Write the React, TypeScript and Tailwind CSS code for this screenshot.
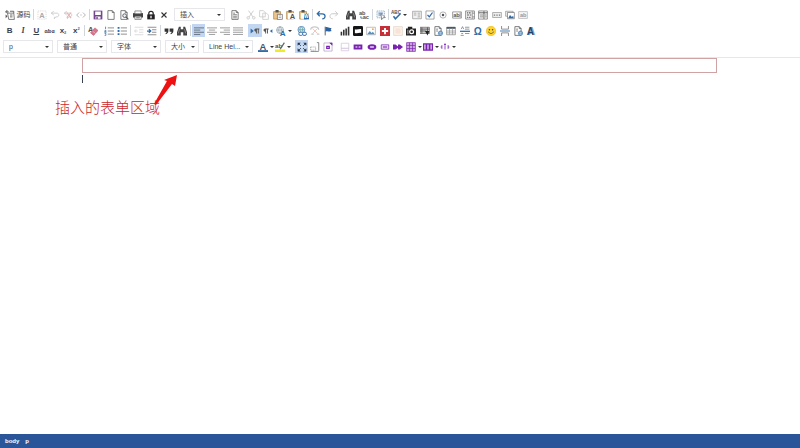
import { useState } from 'react';
import type { ReactNode } from 'react';

const D = '#555';
const B = '#2f6ca8';
const L = '#c9c9c9';
const P = '#7a22b0';

const doc = <path d="M3 1h7l3 3v11H3zM10 1v3h3" fill="#fff" stroke={D} strokeWidth="1.2" />;
const globe = (
  <g fill="#dbe9f7" stroke={B}>
    <circle cx="12" cy="11.5" r="3.5" />
    <path d="M8.5 11.5h7M12 8c-2 2-2 5 0 7M12 8c2 2 2 5 0 7" fill="none" strokeWidth=".7" />
  </g>
);
const board = (
  <>
    <path d="M1 2.500h11v12H1z" fill="#ecc78d" stroke="#b98a4a" strokeWidth="1.2" />
    <path d="M4 0h5v4H4z" fill="#555" />
  </>
);
const letter = (text: string, x: number, y: number, size: number, fill = D) => (
  <text x={x} y={y} fontSize={size} fill={fill} fontWeight="700" fontFamily="Liberation Sans, sans-serif">{text}</text>
);
const lines = (d: string, stroke = D, w = 1.4) => <path d={d} fill="none" stroke={stroke} strokeWidth={w} />;

const icons: Record<string, ReactNode> = {
  source: (
    <>
      <path d="M4 5h10l1 10H6z" fill="#fff" stroke={D} strokeWidth="1.2" />
      {lines('M0 3h6M3 0v5M8 2h6M14 2v3M8 8h4M8 11h4')}
      <path d="M1 7l3 3-3 3z" fill={D} />
    </>
  ),
  autoformat: (
    <>
      <path d="M1.500 1.500h13v13h-13z" fill="none" stroke={L} strokeDasharray="2 1.500" />
      {letter('A', 3.5, 13, 12, '#aaa')}
    </>
  ),
  commentOff: lines('M6 2L2 5l4 3M2 5h9c4 0 4 6 0 6H9l-2 3v-3', L),
  uncomment: (
    <>
      {lines('M6 2L2 5l4 3M2 5h9c4 0 4 6 0 6H9l-2 3v-3', L)}
      {lines('M6 4l7 9M13 4l-7 8', '#e6b1b1', 1.8)}
    </>
  ),
  tag: lines('M5 4L1 8l4 4M11 4l4 4-4 4M7 8h2', '#aaa'),
  save: (
    <>
      <path d="M1 1h14v14H1z" fill="#73468f" />
      <path d="M3.500 2.500h9V8h-9zM4 10.500h8V14H4z" fill="#fff" />
      <path d="M5 11.500h3V14H5z" fill="#73468f" />
    </>
  ),
  page: doc,
  preview: (
    <>
      {doc}
      <circle cx="9" cy="9" r="3" fill="#e6eef6" stroke={D} strokeWidth="1.4" />
      {lines('M11 11l4 4', D, 2)}
    </>
  ),
  print: (
    <>
      <path d="M0 5h16v7H0z" fill="#444" />
      <path d="M3 1.500h10V6H3zM3 10h10v5H3z" fill="#fff" stroke={D} />
      {lines('M5 12.500h6')}
    </>
  ),
  lock: (
    <>
      {lines('M4.500 8V5c0-4 7-4 7 0v3', '#222', 2)}
      <path d="M2 7h12v8H2z" fill="#222" />
      <path d="M7 9h2v4H7z" fill="#fff" />
    </>
  ),
  close: lines('M4 4l8 8M12 4l-8 8', '#333', 1.8),
  template: (
    <>
      {doc}
      {lines('M5 5h3M5 7.500h6M5 10h6M5 12.500h6', '#777')}
    </>
  ),
  cut: (
    <>
      {lines('M4 1l7 10M12 1L5 11', L)}
      <circle cx="3.5" cy="12.5" r="2" fill="none" stroke={L} strokeWidth="1.4" />
      <circle cx="12.5" cy="12.5" r="2" fill="none" stroke={L} strokeWidth="1.4" />
    </>
  ),
  copy: <path d="M1 1h6l3 3v7H1zM6 5h6l3 3v7H6z" fill="#fff" stroke={L} strokeWidth="1.3" />,
  paste: (
    <>
      {board}
      <path d="M7 7h8v8H7z" fill="#fff" stroke={D} />
      {lines('M9 9.500h4M9 12h4', '#888', 1)}
    </>
  ),
  pasteText: (
    <>
      {board}
      <path d="M3 5h12v10H3z" fill="#fff" />
      {letter('A', 6, 15, 12)}
    </>
  ),
  pasteWord: (
    <>
      {board}
      <path d="M3 5h8v9H3z" fill="#fff" />
      <path d="M8 6h8v9H8z" fill={B} />
      {letter('W', 8, 13, 8, '#fff')}
    </>
  ),
  undo: lines('M6 2L2 6l4 4M2 6h8c6 0 6 8 0 8', B, 2),
  redo: lines('M10 2l4 4-4 4M14 6H6c-6 0-6 8 0 8', L, 1.6),
  find: (
    <>
      <path d="M3 1h3v4h4V1h3l3 9v5h-6v-5H6v5H0v-5z" fill="#444" />
      {lines('M4 5l-2 7M12 5l2 7', '#aaa', 1)}
    </>
  ),
  replace: (
    <>
      {letter('ab', 0, 8, 9)}
      {letter('ac', 6, 15, 9)}
      {lines('M3 10v3h3', B)}
    </>
  ),
  selectAll: (
    <>
      <path d="M1.500 1.500h12v11h-12z" fill="#eef4fa" stroke="#7a95b0" strokeDasharray="2 1" />
      {lines('M4 5h7M4 8h4', B)}
      <path d="M8 6l7 6-4 .5-2 3z" fill="#fff" stroke={D} />
    </>
  ),
  spell: (
    <>
      {letter('ABC', 0, 6, 7.5)}
      {lines('M4 10l3 4 8-8', B, 2.4)}
    </>
  ),
  form: (
    <>
      <path d="M1 2h14v12H1z" fill="#f1f1f1" stroke="#888" />
      {lines('M3 5h4M3 8h4M9 5h4M9 8h4M9 11h4', '#999', 1.2)}
    </>
  ),
  checkbox: (
    <>
      <path d="M1.500 1.500h13v13h-13z" fill="#fff" stroke="#777" />
      {lines('M4 8l3 3 5-7', B, 2)}
    </>
  ),
  radio: (
    <>
      <circle cx="8" cy="8" r="5" fill="#fff" stroke="#888" />
      <circle cx="8" cy="8" r="2" fill={D} />
    </>
  ),
  textField: (
    <>
      <path d="M1 3h14v10H1z" fill="#fff" stroke="#666" />
      {letter('ab', 2, 11, 9)}
      {lines('M13 4v8', D, 1)}
    </>
  ),
  textarea: (
    <>
      <path d="M1 1.500h14v13H1z" fill="#fff" stroke="#555" />
      {lines('M3 4.500h2M6 4.500h3M3 8h4M3 11.500h2M6 11.500h3M8 8h2', D, 1.8)}
      {lines('M11.500 2v12M12 5h3M12 11h3', '#555', 1)}
    </>
  ),
  selectField: (
    <>
      <path d="M1 1.500h14v13H1z" fill="#fff" stroke="#555" />
      {lines('M1 4.500h14M9.500 2v12', '#555', 1.5)}
      {lines('M3 8h5M3 11h5M11 8h3M11 11h3', '#777')}
    </>
  ),
  button: (
    <>
      <path d="M1 4h14v8H1z" fill="#eee" stroke="#888" />
      <path d="M3 7h2v2H3zM7 7h2v2H7zM11 7h2v2h-2z" fill="#777" />
    </>
  ),
  imageButton: (
    <>
      <path d="M1 2h12v8H1z" fill="#eee" stroke="#888" />
      <path d="M4 4h11v10H4z" fill="#fff" stroke="#666" />
      <path d="M5 13l3-5 3 3 2-2 1 4z" fill={B} />
    </>
  ),
  hidden: (
    <>
      <path d="M1 2.500h14v11H1z" fill="#f5f5f5" stroke="#aaa" />
      {letter('ab', 3, 11, 9, '#999')}
    </>
  ),
  eraser: (
    <>
      {letter('A', 0, 10, 12)}
      <path d="M11 3l5 4-7 8-5-4z" fill="#d9748a" stroke="#c05b70" />
      {lines('M7 8l5 4', '#f4cbd3', 1)}
    </>
  ),
  ol: (
    <>
      {lines('M6 3h10M6 8h10M6 13h10', '#777', 1.3)}
      {lines('M2.500 1v4M1 7h2v2H1v1h3M1 12h2v3H1', B, 1.2)}
    </>
  ),
  ul: (
    <>
      {lines('M6 3h10M6 8h10M6 13h10', '#777', 1.3)}
      <path d="M1 1.500h3v3H1zM1 6.500h3v3H1zM1 11.500h3v3H1z" fill={B} />
    </>
  ),
  outdent: lines('M1 2h14M8 6h7M8 10h7M1 14h14M6 8H1M3 5.500L1 8l2 2.500', '#d0d0d0', 1.2),
  indent: (
    <>
      {lines('M1 2h14M8 6h7M8 10h7M1 14h14', '#777', 1.3)}
      {lines('M0 8h6M3 5l3 3-3 3', B, 2)}
    </>
  ),
  quote: (
    <path d="M1 4h6v4c0 3-2 4-4 5l-1-1c2-1 2-2 2-3H1zM9 4h6v4c0 3-2 4-4 5l-1-1c2-1 2-2 2-3H9z" fill="#333" />
  ),
  left: lines('M0 3h16M0 6.500h10M0 10h16M0 13.500h10', '#55606e', 1.3),
  center: lines('M0 3h16M3 6.500h10M0 10h16M3 13.500h10', '#888', 1.3),
  right: lines('M0 3h16M6 6.500h10M0 10h16M6 13.500h10', '#888', 1.3),
  justify: lines('M0 3h16M0 6.500h16M0 10h16M0 13.500h16', '#888', 1.3),
  ltr: (
    <>
      <path d="M1 4l5 4-5 4z" fill={B} />
      <path d="M15 4v1.500h-1V12h-1.500V5.500H11V12H9.500V9C6 9 6 4 9.500 4z" fill={D} />
    </>
  ),
  rtl: (
    <>
      <path d="M15 5l-4 3 4 3z" fill={B} />
      <path d="M9 4v1.500H8V12H6.500V5.500H5V12H3.500V9C0 9 0 4 3.500 4z" fill={D} />
    </>
  ),
  language: (
    <>
      <circle cx="6.5" cy="6.5" r="5.5" fill="#eef4f8" stroke="#7d8f9c" />
      {lines('M1 6.500h11M6.500 1c-3 3-3 8 0 11M6.500 1c3 3 3 8 0 11', '#7d8f9c', 0.9)}
      {letter('A', 6, 16, 13, B)}
    </>
  ),
  link: (
    <>
      <circle cx="7" cy="6" r="5.5" fill="#d7e9f5" stroke={B} />
      {lines('M2 6h10M7 1c-3 3-3 7 0 10M7 1c3 3 3 7 0 10', '#3f8e85', 0.9)}
      <rect x="3" y="10" width="6" height="5" rx="2" fill="#fff" stroke={B} strokeWidth="1.5" />
      <rect x="9" y="10" width="6" height="5" rx="2" fill="#fff" stroke={B} strokeWidth="1.5" />
    </>
  ),
  unlink: (
    <>
      {lines('M1 6c1-6 12-6 13 0M2 13h4M11 13h4', L, 2)}
      {lines('M4 4l8 8M12 4l-8 8', '#edc0b5')}
    </>
  ),
  anchor: (
    <>
      {lines('M3.500 1v14', '#567', 1.6)}
      <path d="M4 2c4-1 5 2 10 1-2 2-2 3 0 5-5 2-6-1-10 1z" fill="#2c62a0" />
    </>
  ),
  chart: <path d="M1 9h2.500v6H1zM4.800 6h2.500v9H4.800zM8.600 4h2.500v11H8.600zM12.400 1H15v14h-2.600z" fill="#333" />,
  youtube: (
    <>
      <rect width="16" height="16" rx="2" fill="#151515" />
      <path d="M3 5c3 2 7-1 10 0v6c-3-1-7 2-10 0z" fill="#fff" />
    </>
  ),
  image: (
    <>
      <path d="M1 2h14v12H1z" fill="#fff" stroke="#999" />
      <path d="M2 13l4-5 3 3 2-2 3 4z" fill="#5591bf" />
      <circle cx="11" cy="5" r="1.4" fill="#e1a63b" />
    </>
  ),
  flash: (
    <>
      <path d="M0 0h16v16H0z" fill="#c62f35" />
      <path d="M6.500 3h3v3.500H13v3H9.500V13h-3V9.500H3v-3h3.500z" fill="#fff" />
    </>
  ),
  map: (
    <>
      <path d="M1 1h14v14H1z" fill="#fbf2e9" stroke="#ddcdc2" />
      <path d="M4 4h8v8H4z" fill="#f7e3d8" />
    </>
  ),
  camera: (
    <>
      <path d="M0 4h3V1h7v3h6v11H0z" fill="#222" />
      <circle cx="9" cy="9" r="4" fill="#fff" />
      <circle cx="9" cy="9" r="2" fill="#222" />
      <path d="M2 6h2v7H2z" fill="#999" />
    </>
  ),
  video: (
    <>
      <path d="M0 2h15v10H0z" fill="#ccc" stroke={D} />
      {lines('M0 5h15M0 8h10M3 2v10M12 2v6', D, 1.3)}
      <path d="M8 8h7l-3 7z" fill="#222" />
    </>
  ),
  iframe: (
    <>
      {doc}
      {lines('M5 5h3M5 8h3', '#777')}
      {globe}
    </>
  ),
  table: (
    <>
      <path d="M1 2h14v12H1z" fill="#fff" stroke="#777" />
      <path d="M1 1.500h14v3H1z" fill="#4a5968" />
      {lines('M1 8h14M1 11h14M5.500 3v11M10.500 3v11', '#888', 1)}
    </>
  ),
  hr: (
    <>
      {lines('M0 8.500h16', B, 2)}
      {lines('M2 5l2-4 2 4M8 2h7M8 5h7M2 12h3M8 12h7M1 15h5', '#777', 1.2)}
    </>
  ),
  omega: letter('Ω', 1, 14, 16, B),
  smiley: (
    <>
      <circle cx="8" cy="8" r="7.5" fill="#ffd42a" stroke="#e8b82a" />
      <circle cx="5.5" cy="6" r="1.2" fill="#443" />
      <circle cx="10.5" cy="6" r="1.2" fill="#443" />
      {lines('M4 9c1 4 7 4 8 0', '#443', 1.2)}
    </>
  ),
  pageBreak: (
    <>
      {lines('M2.500 0v5h11V0M2.500 16v-5h11v5', '#777', 1.3)}
      {lines('M0 8h16', B, 1.4)}
    </>
  ),
  wordart: (
    <>
      {letter('A', 3, 15, 16, '#7fa9cf')}
      {letter('A', 1, 14, 16, '#1d4468')}
    </>
  ),
  textColor: (
    <>
      {letter('A', 2.5, 12, 15, '#456')}
      <path d="M0 13h16v3H0z" fill={B} />
    </>
  ),
  highlight: (
    <>
      {letter('ab', 0, 10, 10)}
      {lines('M8 12l7-11', '#666', 2)}
      <path d="M0 12h16v4H0z" fill="#f2e92a" />
    </>
  ),
  maximize: (
    <>
      {lines('M2 2l12 12M14 2L2 14', '#345', 1.4)}
      <path d="M1 1h5L1 6zM10 1h5v5zM1 10l5 5H1zM15 10v5h-5z" fill="#234" />
      <path d="M6 6h4v4H6z" fill="#cfe0f5" />
    </>
  ),
  blocks: (
    <>
      <path d="M1 8h8v5H1z" fill="#fff" stroke="#888" strokeDasharray="2 1" />
      {lines('M11 1h3v13M1 15h13', '#777', 1.4)}
    </>
  ),
  about: (
    <>
      <path d="M1.500 1.500h13v13h-13z" fill="#fff" stroke="#a294b0" />
      <path d="M10 1h5v5zM5 6h6v5H5z" fill={P} />
      <path d="M7 8h2v1H7z" fill="#fff" />
    </>
  ),
  panel: (
    <>
      <path d="M2 2h12v12H2z" fill="#fff" stroke="#cbb9d6" />
      {lines('M2 10h12', '#cbb9d6')}
    </>
  ),
  bsButton: (
    <>
      <path d="M1 4h14v8H1z" fill={P} />
      {lines('M4 8h3M9 8h3', '#fff', 1.8)}
    </>
  ),
  bsBadge: (
    <>
      <ellipse cx="8" cy="8" rx="7" ry="4.5" fill={P} />
      {lines('M5 8h6', '#fff', 2)}
    </>
  ),
  bsLabel: (
    <>
      <path d="M2 4.500h12v7H2z" fill="#f0e6f5" stroke={P} strokeWidth="1.2" />
      {lines('M4.500 8h7', P, 1.8)}
    </>
  ),
  bsNext: <path d="M0 4h4l4 3V4h3l5 4-5 4H8V9l-4 3H0z" fill={P} />,
  bsGrid: (
    <>
      <path d="M1 1h14v14H1z" fill="#cfaadf" />
      {lines('M1 1h14M1 5.500h14M1 10.500h14M1 15h14M1 1v14M5.500 1v14M10.500 1v14M15 1v14', P, 1.1)}
    </>
  ),
  bsColumns: (
    <>
      <path d="M0 2h16v12H0z" fill={P} />
      {lines('M3 4v8M8 4v8M13 4v8', '#cfaadf', 2.6)}
    </>
  ),
  bsSpacing: (
    <>
      {lines('M3 5v6M8 6v6M13 5v6M1 8h2M13 8h2', P, 1.3)}
      <circle cx="8" cy="4" r="1.5" fill={P} />
    </>
  ),
};

const textIcons: Record<string, ReactNode> = {
  bold: <span className="font-bold">B</span>,
  italic: <span className="font-['Liberation_Serif',serif] font-bold italic">I</span>,
  underline: <span className="font-bold underline">U</span>,
  strike: <span className="text-[6px] font-bold line-through decoration-gray-400">abc</span>,
  sub: <span className="flex font-bold">x<span className="self-end text-[4px] leading-none text-[#2f6ca8]">2</span></span>,
  sup: <span className="flex font-bold">x<span className="self-start text-[4px] leading-none text-[#2f6ca8]">2</span></span>,
};

function Caret() {
  return (
    <svg viewBox="0 0 4 2" className="h-[2px] w-1 shrink-0"><path d="M0 0h4L2 2z" fill="#333" /></svg>
  );
}

interface ToolProps {
  name: string;
  menu?: boolean;
  active?: boolean;
  children?: ReactNode;
}

function Tool({ name, menu, active, children }: ToolProps) {
  return (
    <button
      type="button"
      aria-label={name}
      aria-pressed={active}
      className={`flex h-[13px] min-w-0 flex-1 items-center justify-center gap-[2px] whitespace-nowrap text-[8px] leading-none text-gray-700 ${active ? 'bg-[#c3d6f1]' : 'hover:bg-gray-100'}`}
    >
      {textIcons[name] ?? (
        <svg viewBox="0 0 16 16" className="size-[10px] shrink-0">{icons[name]}</svg>
      )}
      {children}
      {menu && <Caret />}
    </button>
  );
}

function Group({ width, names, active, menu }: { width: string; names: string[]; active?: string; menu?: boolean }) {
  return (
    <div className={`flex shrink-0 ${width}`}>
      {names.map((name, i) => <Tool key={name + i} name={name} active={name === active} menu={menu} />)}
    </div>
  );
}

function Sep({ blank }: { blank?: boolean }) {
  return (
    <span className="flex h-[11px] w-[3px] shrink-0 justify-center">
      {!blank && <span className="w-px bg-gray-300" />}
    </span>
  );
}

function Combo({ label, value, width }: { label: string; value: string; width: string }) {
  const [current, setCurrent] = useState(value);
  return (
    <div className={`grid h-[13px] shrink-0 items-center border border-gray-200 ${width}`}>
      <select
        aria-label={label}
        value={current}
        onChange={(e) => setCurrent(e.target.value)}
        className="col-start-1 row-start-1 w-full appearance-none bg-transparent pl-[5px] text-[7px] leading-[11px] text-[#444] outline-none"
      >
        <option>{value}</option>
      </select>
      <span className="pointer-events-none col-start-1 row-start-1 mr-[3px] flex justify-self-end"><Caret /></span>
    </div>
  );
}

function Toolbar() {
  return (
    <header className="flex flex-col gap-[3px] overflow-hidden border-b border-gray-200 pt-2 pr-1 pb-1 pl-[3px]">
      <div className="flex items-center">
        <div className="flex w-[29px] shrink-0">
          <Tool name="source"><span className="text-[7px]">源码</span></Tool>
        </div>
        <Sep />
        <Group width="w-[53px]" names={['autoformat', 'commentOff', 'uncomment', 'tag']} />
        <Sep />
        <Group width="w-[80px]" names={['save', 'page', 'preview', 'print', 'lock', 'close']} />
        <div className="mx-[3px]"><Combo label="插入" value="插入" width="w-[51px]" /></div>
        <Group width="w-[13px]" names={['template']} />
        <Sep blank />
        <Group width="w-[67px]" names={['cut', 'copy', 'paste', 'pasteText', 'pasteWord']} />
        <Sep />
        <Group width="w-[27px]" names={['undo', 'redo']} />
        <Sep blank />
        <Group width="w-[27px]" names={['find', 'replace']} />
        <Sep />
        <Group width="w-[13px]" names={['selectAll']} />
        <Sep />
        <Group width="w-[17px]" names={['spell']} menu />
        <Sep blank />
        <Group width="w-[120px]" names={['form', 'checkbox', 'radio', 'textField', 'textarea', 'selectField', 'button', 'imageButton', 'hidden']} />
      </div>

      <div className="flex items-center">
        <Group width="w-[80px]" names={['bold', 'italic', 'underline', 'strike', 'sub', 'sup']} />
        <Sep />
        <Group width="w-[13px]" names={['eraser']} />
        <Sep blank />
        <Group width="w-[27px]" names={['ol', 'ul']} />
        <Sep />
        <Group width="w-[27px]" names={['outdent', 'indent']} />
        <Sep />
        <Group width="w-[27px]" names={['quote', 'find']} />
        <Sep />
        <Group width="w-[53px]" names={['left', 'center', 'right', 'justify']} active="left" />
        <Sep blank />
        <Group width="w-[27px]" names={['ltr', 'rtl']} active="ltr" />
        <Group width="w-[17px]" names={['language']} menu />
        <Sep blank />
        <Group width="w-[40px]" names={['link', 'unlink', 'anchor']} />
        <Sep blank />
        <Group
          width="w-[200px]"
          names={['chart', 'youtube', 'image', 'flash', 'map', 'camera', 'video', 'iframe', 'table', 'hr', 'omega', 'smiley', 'pageBreak', 'iframe', 'wordart']}
        />
      </div>

      <div className="flex items-center">
        <div className="mr-1 flex gap-1">
          <Combo label="样式" value="p" width="w-[50px]" />
          <Combo label="格式" value="普通" width="w-[50px]" />
          <Combo label="字体" value="字体" width="w-[50px]" />
          <Combo label="大小" value="大小" width="w-[34px]" />
          <Combo label="Line Height" value="Line Hei..." width="w-[50px]" />
        </div>
        <Group width="w-[35px]" names={['textColor', 'highlight']} menu />
        <Sep blank />
        <Group width="w-[40px]" names={['maximize', 'blocks', 'about']} active="maximize" />
        <Sep blank />
        <Group width="w-[67px]" names={['panel', 'bsButton', 'bsBadge', 'bsLabel', 'bsNext']} />
        <Group width="w-[51px]" names={['bsGrid', 'bsColumns', 'bsSpacing']} menu />
      </div>
    </header>
  );
}

export default function App() {
  return (
    <div className="flex min-h-screen flex-col bg-white font-['Liberation_Sans','Noto_Sans_CJK_SC',sans-serif] text-gray-800">
      <Toolbar />

      <main className="relative flex-1 pr-[83px] pl-[82px]">
        <form className="h-[15px] border border-[#cfa3a3]" />
        <div className="mt-[2px] h-2 w-px bg-gray-700" />
        <p className="absolute top-[39px] left-[55px] text-[15px] leading-[22px] font-light text-[#c8282d]">插入的表单区域</p>
        <svg viewBox="0 0 26 32" className="absolute top-4 left-[153px] h-8 w-[26px]">
          <path d="M24 1l-2 11-3-2L3 31l-2-1L14 7l-3-1z" fill="#ee1111" />
        </svg>
      </main>

      <footer className="flex h-[14px] items-center gap-[6px] bg-[#2a5699] px-[5px] pt-px text-[6px] font-bold text-white">
        <a href="#body">body</a>
        <a href="#p">p</a>
      </footer>
    </div>
  );
}
